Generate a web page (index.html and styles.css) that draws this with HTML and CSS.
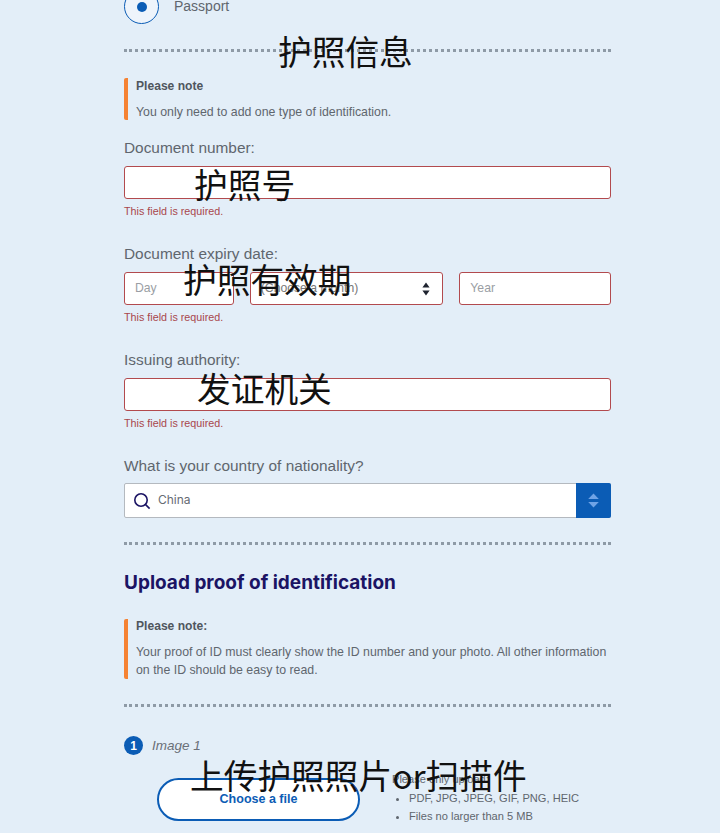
FILE: index.html
```html
<!DOCTYPE html>
<html lang="en">
<head>
<meta charset="utf-8">
<title>Passport</title>
<link rel="stylesheet" href="styles.css">
</head>
<body>
<main class="form">
  <div class="radio-row">
    <span class="radio"><span class="radio-dot"></span></span>
    <span class="radio-label">Passport</span>
  </div>
  <div class="divider first">
    <span class="stamp stamp-info">护照信息</span>
  </div>
  <div class="note note-short">
    <p class="note-title">Please note</p>
    <p class="note-text">You only need to add one type of identification.</p>
  </div>
  <div class="field f-doc">
    <label class="label">Document number:</label>
    <div class="input invalid"><span class="stamp stamp-num">护照号</span></div>
    <p class="error">This field is required.</p>
  </div>
  <div class="field f-next">
    <label class="label">Document expiry date:</label>
    <div class="date-row">
      <div class="input invalid day"><span class="ph">Day</span></div>
      <div class="input invalid month"><span class="ph ph-month">(Choose a month)</span>
        <svg class="updown" viewBox="0 0 8 14" width="8" height="14"><path d="M4 0.5 7.6 5.6H0.4Z M4 13.5 0.4 8.4H7.6Z" fill="#1f2430"/></svg>
      </div>
      <div class="input invalid year"><span class="ph">Year</span></div>
      <span class="stamp stamp-date">护照有效期</span>
    </div>
    <p class="error">This field is required.</p>
  </div>
  <div class="field f-next">
    <label class="label">Issuing authority:</label>
    <div class="input invalid"><span class="stamp stamp-auth">发证机关</span></div>
    <p class="error">This field is required.</p>
  </div>
  <div class="field f-nat">
    <label class="label">What is your country of nationality?</label>
    <div class="combo">
      <svg class="search" viewBox="0 0 18 18" width="18" height="18"><circle cx="8" cy="8" r="6.2" fill="none" stroke="#1b1464" stroke-width="1.6"/><path d="M12.6 12.6 16.6 16.6" stroke="#1b1464" stroke-width="1.6" fill="none"/></svg>
      <span class="combo-value">China</span>
      <span class="combo-btn">
        <svg viewBox="0 0 11 15" width="11" height="15"><path d="M5.5 0.5 10.8 6H0.2Z M5.5 14.5 0.2 9H10.8Z" fill="#6fa3e6"/></svg>
      </span>
    </div>
  </div>
  <div class="divider mid"></div>
  <h2 class="heading">Upload proof of identification</h2>
  <div class="note note-long">
    <p class="note-title">Please note:</p>
    <p class="note-text">Your proof of ID must clearly show the ID number and your photo. All other information on the ID should be easy to read.</p>
  </div>
  <div class="divider last"></div>
  <div class="step">
    <span class="step-num">1</span>
    <span class="step-label">Image 1</span>
  </div>
  <div class="upload">
    <button class="file-btn" type="button">Choose a file</button>
    <div class="rules">
      <p class="rules-title">Please only upload:</p>
      <ul class="rules-list">
        <li>PDF, JPG, JPEG, GIF, PNG, HEIC</li>
        <li>Files no larger than 5 MB</li>
      </ul>
    </div>
    <span class="stamp stamp-up">上传护照照片or扫描件</span>
  </div>
</main>
</body>
</html>
```
FILE: styles.css
```css
html, body { margin: 0; padding: 0; }
body {
  width: 720px;
  height: 833px;
  overflow: hidden;
  background: #e3eef8;
  font-family: "Liberation Sans", Arial, sans-serif;
  color: #4f5660;
}
p, h2, ul { margin: 0; padding: 0; }
.form {
  width: 487px;
  margin: -11px 0 0 124px;
  display: flex;
  flex-direction: column;
}
.radio-row { display: flex; align-items: flex-start; gap: 15px; }
.radio {
  width: 35px; height: 35px; box-sizing: border-box;
  border: 1px solid #0b5cb5; border-radius: 50%;
  background: #eef4fb;
  display: flex; align-items: center; justify-content: center;
}
.radio-dot { width: 10px; height: 10px; border-radius: 50%; background: #0b5cb5; }
.radio-label { font-size: 14px; line-height: 12px; margin-top: 11px; color: #5f666e; }
.divider { height: 0; border-top: 3px dotted #8e9aa6; position: relative; }
.divider.first { margin-top: 25px; }
.divider.mid { margin-top: 24px; }
.divider.last { margin-top: 25px; }
.stamp {
  position: absolute;
  font-family: "Noto Sans CJK SC", sans-serif;
  font-size: 33.7px;
  line-height: 40px;
  color: #111;
  white-space: nowrap;
  z-index: 2;
}
.stamp-info { left: 154px; top: -21px; }
.stamp-num { left: 69px; top: -3px; }
.stamp-date { left: 59px; top: -13px; }
.stamp-auth { left: 72px; top: -11px; }
.stamp-up { left: 33px; top: -23px; }
.note { border-left: 4px solid #f58233; border-radius: 2px; padding-left: 8px; }
.note-short { margin-top: 26px; height: 42px; }
.note-long { margin-top: 24px; height: 60px; }
.note-title { font-size: 12.1px; font-weight: 700; line-height: 16px; color: #50565e; }
.note-text { font-size: 12.34px; line-height: 18px; margin-top: 9px; color: #5f666e; }
.note-short .note-text { margin-top: 10px; line-height: 16px; }
.note-long .note-title { margin-top: -1px; }
.label { display: block; font-size: 15.4px; line-height: 18px; color: #5f666e; }
.field { display: flex; flex-direction: column; }
.f-doc { margin-top: 19px; }
.f-next { margin-top: 28px; }
.f-nat { margin-top: 28px; }
.input {
  position: relative;
  height: 33px;
  margin-top: 9px;
  box-sizing: border-box;
  background: #fff;
  border: 1px solid #b24a4e;
  border-radius: 3px;
  display: flex;
  align-items: center;
}
.error { font-size: 10.75px; line-height: 12px; margin-top: 6px; color: #a8474c; }
.date-row { position: relative; display: flex; gap: 16px; margin-top: 9px; }
.date-row .input { margin-top: 0; }
.day { width: 110px; }
.month { width: 194px; }
.year { width: 152px; }
.ph { font-size: 12.2px; color: #9a9ea4; padding: 0 0 2px 10px; }
.ph-month { color: #777; }
.updown { position: absolute; right: 12px; top: 9px; }
.combo {
  position: relative;
  height: 35px;
  margin-top: 8px;
  box-sizing: border-box;
  background: #fff;
  border: 1px solid #b4b9bf;
  border-radius: 2px;
  display: flex;
  align-items: center;
}
.search { margin-left: 8px; }
.combo-value { font-size: 12px; margin-left: 7px; padding-bottom: 2px; font-family: "Inter", sans-serif; color: #666b73; }
.combo-btn {
  margin-left: auto;
  margin-right: -1px;
  width: 35px;
  height: 35px;
  background: #0b5cb5;
  border-radius: 0 2px 2px 0;
  display: flex;
  align-items: center;
  justify-content: center;
}
.heading {
  font-family: "Inter", sans-serif;
  font-size: 19px;
  line-height: 24px;
  font-weight: 700;
  color: #1b1464;
  margin-top: 26px;
}
.step { display: flex; align-items: center; gap: 9px; margin-top: 29px; }
.step-num {
  width: 19px; height: 19px; border-radius: 50%;
  background: #0b5cb5; color: #fff;
  font-size: 12px; font-weight: 700;
  display: flex; align-items: center; justify-content: center;
}
.step-label { font-size: 13.5px; font-style: italic; color: #6a7078; }
.upload { position: relative; display: flex; gap: 32px; margin: 23px 0 0 33px; align-items: flex-start; }
.file-btn {
  width: 203px; height: 43px;
  background: #fff;
  border: 2px solid #0b5cb5;
  border-radius: 22px;
  color: #0b5cb5;
  font-family: "Liberation Sans", Arial, sans-serif;
  font-size: 12.5px; font-weight: 700;
  padding: 0 0 2px;
}
.rules { font-size: 11.1px; color: #5f666e; margin-top: -7px; }
.rules-title { line-height: 16px; }
.rules-list { list-style: disc; margin-top: 2px; padding-left: 17px; }
.rules-list li { line-height: 18px; }
```
